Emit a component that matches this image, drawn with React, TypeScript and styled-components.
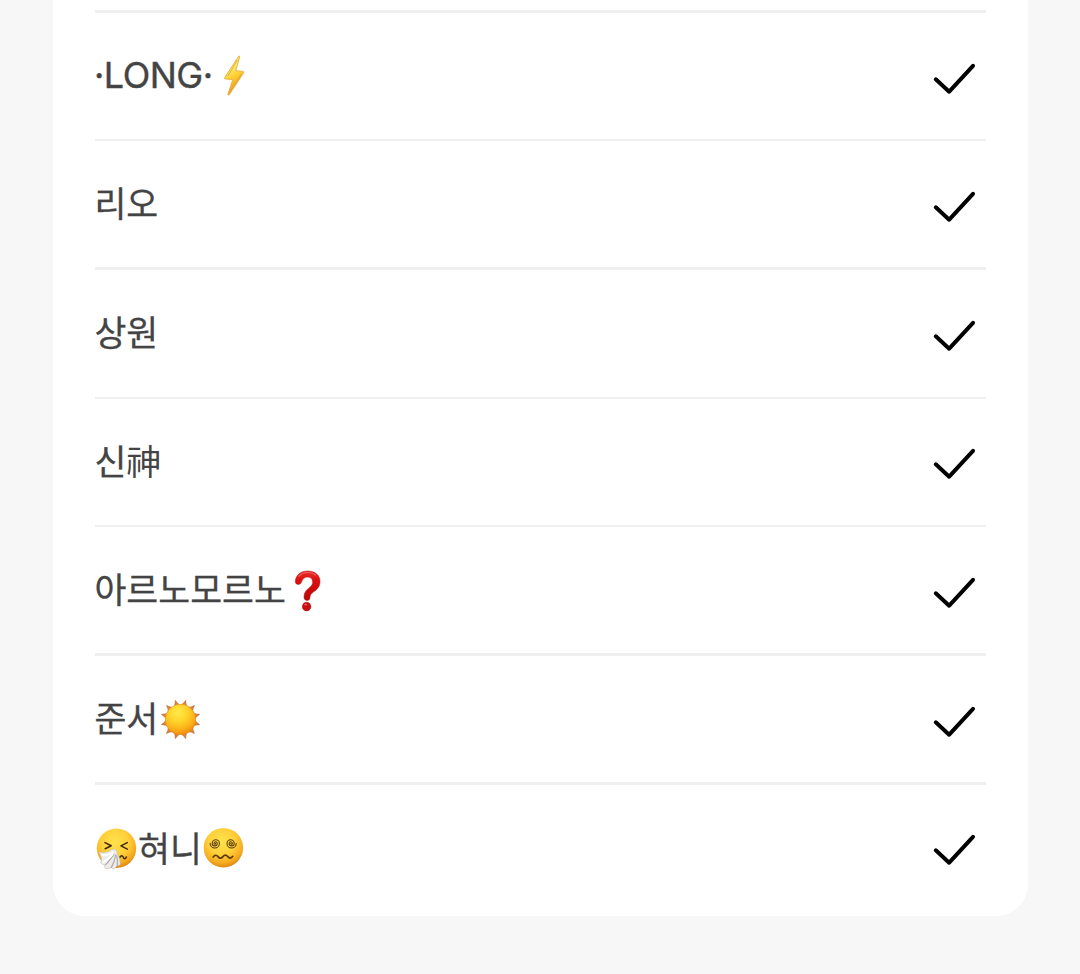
import { ReactNode } from "react";
import styled, { createGlobalStyle } from "styled-components";

const COLORS = {
  background: "#f7f7f7",
  surface: "#ffffff",
  border: "#efefef",
  textPrimary: "#444444",
  check: "#000000",
};

interface IMember {
  id: string;
  name: ReactNode;
  height: number;
  line: number;
  offset: number;
}

const GlobalStyle = createGlobalStyle`
  * {
    box-sizing: border-box;
  }

  body {
    margin: 0;
    background: ${COLORS.background};
  }
`;

const Page = styled.main`
  height: 974px;
  padding: 0 52px 58px 53px;
  background: ${COLORS.background};
  overflow: hidden;
`;

const Card = styled.ul`
  margin: 0;
  padding: 10px 42px 0;
  list-style: none;
  background: ${COLORS.surface};
  border-radius: 0 0 32px 32px;
`;

const Row = styled.li<{ $height: number; $line: number; $offset: number }>`
  display: flex;
  align-items: flex-start;
  justify-content: space-between;
  height: ${(props) => props.$height}px;
  padding-top: ${(props) => props.$offset - props.$line}px;
  border-top: ${(props) => props.$line}px solid ${COLORS.border};
`;

const Name = styled.div`
  display: flex;
  align-items: center;
  height: 48px;
  color: ${COLORS.textPrimary};
  white-space: nowrap;
`;

const Hangul = styled.span<{ $rise?: number }>`
  padding-bottom: ${(props) => props.$rise ?? 6}px;
  margin-left: -0.6px;
  font-family: "Noto Sans CJK KR", sans-serif;
  font-size: 34.7px;
  font-weight: 400;
  line-height: 42px;
  -webkit-text-stroke: 0.3px ${COLORS.textPrimary};
`;

const Hanja = styled(Hangul)`
  margin-left: 0;
  -webkit-text-stroke: 0;
`;

const Latin = styled.span`
  padding-bottom: 4px;
  margin-left: -1px;
  font-family: Inter, sans-serif;
  font-size: 36px;
  font-weight: 400;
  line-height: 44px;
  letter-spacing: -0.5px;
  -webkit-text-stroke: 0.4px ${COLORS.textPrimary};
`;

const Emoji = styled.svg<{ $left?: number; $right?: number }>`
  flex: none;
  width: 42px;
  height: 42px;
  margin-left: ${(props) => props.$left ?? 0}px;
  margin-right: ${(props) => props.$right ?? 0}px;
  overflow: visible;
`;

const Check = styled.svg`
  flex: none;
  width: 48px;
  height: 48px;
  margin-right: 8px;
  fill: none;
  stroke: ${COLORS.check};
  stroke-width: 4;
  stroke-linecap: round;
  stroke-linejoin: round;
`;

const BoltEmoji = () => (
  <Emoji viewBox="0 0 42 42" $left={2}>
    <defs>
      <linearGradient id="bolt" x1="0" y1="0" x2="0.3" y2="1">
        <stop offset="0" stopColor="#fbd35c" />
        <stop offset="0.35" stopColor="#fff06e" />
        <stop offset="0.65" stopColor="#fcc92c" />
        <stop offset="1" stopColor="#e89a1c" />
      </linearGradient>
    </defs>
    <path
      d="M23.6 0.2 9.6 21.8Q9.2 22.8 10.4 22.9L17.7 23.6 12.9 38.6Q13.2 39.9 14.4 38.4L28.7 16.8Q29.2 15.5 27.8 15.4L20.8 14.8 24.6.9Q24.5-.4 23.6.2Z"
      fill="url(#bolt)"
      stroke="#e8ad3d"
      strokeWidth="0.9"
      strokeLinejoin="round"
    />
    <path d="m22.5 4-9.8 16.2M14.5 36.5l12-18.3" stroke="#e39b35" strokeWidth="0.8" />
  </Emoji>
);

const QuestionEmoji = () => (
  <Emoji viewBox="0 0 42 42" $left={0.6}>
    <defs>
      <linearGradient id="question" x1="0" y1="0" x2="0" y2="1">
        <stop offset="0" stopColor="#ea302b" />
        <stop offset="0.3" stopColor="#de1010" />
        <stop offset="1" stopColor="#b80808" />
      </linearGradient>
    </defs>
    <path
      d="M9.3 11.4C9.8 5 14.8 1 21.6 1c7.3 0 12.4 4 12.4 10.4 0 4.8-2.4 7.6-6 10.2-2.9 2.1-3.9 3.2-4.1 6.3-.2 1.7-1.1 2.5-2.9 2.5-2 0-3-1.1-3-3.3 0-4.2 1.6-6.7 5-9.2 2.5-1.9 3.7-3.4 3.7-5.8 0-3.1-2.1-5-5.2-5-3.1 0-4.7 1.5-5.8 4.5-.7 2-1.7 2.8-3.3 2.8-2 0-3.2-1.1-3.1-3Z"
      fill="url(#question)"
      stroke="#b50f0f"
      strokeWidth="0.5"
    />
    <circle cx="20.6" cy="36.6" r="4.3" fill="#c90c0c" stroke="#a90c0c" strokeWidth="0.5" />
    <path
      d="M13.1 6.2c2-2.5 4.8-3.7 8.6-3.7 3.2 0 5.9.9 7.7 2.5"
      fill="none"
      stroke="#f4665f"
      strokeWidth="1.1"
      strokeLinecap="round"
    />
    <ellipse cx="19.8" cy="34.6" rx="1.6" ry="0.9" fill="#ee625c" />
  </Emoji>
);

const SunEmoji = () => (
  <Emoji viewBox="0 0 42 42" $left={1.5}>
    <defs>
      <radialGradient id="sun" cx="0.42" cy="0.28" r="0.75">
        <stop offset="0" stopColor="#ffe94a" />
        <stop offset="0.4" stopColor="#ffd42b" />
        <stop offset="0.75" stopColor="#fcae17" />
        <stop offset="1" stopColor="#ee8512" />
      </radialGradient>
    </defs>
    {Array.from({ length: 12 }, (_, i) => (
      <path
        key={i}
        d="M16.8 6.8Q19.7 4.6 20.5.8 21.3 4.6 24.2 6.8Z"
        fill="#dd8638"
        stroke="#b3622a"
        strokeWidth="0.6"
        transform={`rotate(${15 + i * 30} 20.5 20.5)`}
      />
    ))}
    <circle cx="20.5" cy="20.5" r="15.2" fill="url(#sun)" stroke="#e69222" strokeWidth="0.5" />
  </Emoji>
);

const FaceGradient = ({ id }: { id: string }) => (
  <defs>
    <radialGradient id={id} cx="0.46" cy="0.34" r="0.68">
      <stop offset="0" stopColor="#ffe24c" />
      <stop offset="0.5" stopColor="#ffd03a" />
      <stop offset="0.8" stopColor="#f6ac20" />
      <stop offset="1" stopColor="#d98212" />
    </radialGradient>
  </defs>
);

const SneezeEmoji = () => (
  <Emoji viewBox="0 0 42 42" $right={1.6}>
    <FaceGradient id="sneeze" />
    <circle cx="21.5" cy="21.3" r="19.7" fill="url(#sneeze)" />
    <g fill="none" stroke="#45290b" strokeWidth="1.6" strokeLinecap="round" strokeLinejoin="round">
      <path d="m10 15.6 6.2 3.1-6 3M32.3 15.6l-6.3 3.3 6.3 3.2" />
      <path d="M25 30.2c1-2 2.7-1.9 3.4.3.6 1.8 2.1 1.6 3-.5" />
    </g>
    <path
      d="M3.4 25c3 .4 6.6 1 9.5-.3 2.4-1 4.4-3.3 6.6-2.6 2 .6 2.8 2.5 2.6 4.4 2.1 3.1 3.5 7 3.1 11.4-1 .6-2.1.7-3.2.3-.6 1.8-1.6 3-3.1 3.8-1.1-.3-2-.8-2.5-1.6-1.8 1.2-3.9 1.7-6.1 1-.9-1.2-.8-2.5-.1-3.8-1.7.2-3.2-.3-4.5-1.6 1.4-3.6.8-7.1-2.3-11Z"
      fill="#eeecea"
      stroke="#b5b0a8"
      strokeWidth="0.5"
    />
    <path
      d="M19 27.2c-2.6 3.6-5 7.2-8.2 10.4M20.6 28c-.6 4.3-2 8.6-4.3 12.6M21.6 28.8c1.2 3.2 1.3 6 .6 9.1"
      fill="none"
      stroke="#b0aca7"
      strokeWidth="1.2"
      strokeLinecap="round"
    />
    <path
      d="M18 25.4c-3.8 1.9-7.6 3.4-10.8 2.6M17.5 27.5c-3 2.8-5.6 5.6-9 7.3"
      fill="none"
      stroke="#ffffff"
      strokeWidth="2"
      strokeLinecap="round"
    />
  </Emoji>
);

const Swirl = ({ transform }: { transform: string }) => (
  <path
    d="M.4 0a.8.8 0 0 1-1.6 0 1.6 1.6 0 0 1 3.2 0 2.5 2.5 0 0 1-5 0 3.6 3.6 0 0 1 7.2 0 4.6 4.6 0 0 1-9.2 0"
    transform={transform}
    strokeWidth="1.1"
  />
);

const DizzyEmoji = () => (
  <Emoji viewBox="0 0 42 42" $left={0.8}>
    <FaceGradient id="dizzy" />
    <circle cx="20.4" cy="20.8" r="19.7" fill="url(#dizzy)" />
    <g fill="none" stroke="#5c3c0d" strokeLinecap="round" strokeLinejoin="round">
      <Swirl transform="translate(12.2 16.4)" />
      <Swirl transform="translate(28.2 16.4) scale(-1 1)" />
      <path
        d="M10.2 30.1c1.7-2.3 3.3-2.4 4.8-.5 1.7 2.1 3.2 2.1 4.9 0 1.7-2 3.2-2 4.9 0 1.7 2.1 3.3 1.9 5-.3"
        strokeWidth="1.7"
      />
    </g>
  </Emoji>
);

const CheckIcon = () => (
  <Check viewBox="0 0 48 48">
    <path d="M5.8 26.3 19.2 38.7 43 12.8" />
  </Check>
);

const MEMBERS: IMember[] = [
  {
    id: "long",
    name: (
      <>
        <Latin>·LONG·</Latin>
        <BoltEmoji />
      </>
    ),
    height: 129,
    line: 3,
    offset: 43,
  },
  { id: "rio", name: <Hangul>리오</Hangul>, height: 128, line: 2, offset: 42 },
  { id: "sangwon", name: <Hangul>상원</Hangul>, height: 130, line: 3, offset: 43 },
  {
    id: "shin",
    name: (
      <>
        <Hangul $rise={4}>신</Hangul>
        <Hanja $rise={4}>神</Hanja>
      </>
    ),
    height: 128,
    line: 2,
    offset: 41,
  },
  {
    id: "arno",
    name: (
      <>
        <Hangul>아르노모르노</Hangul>
        <QuestionEmoji />
      </>
    ),
    height: 128,
    line: 2,
    offset: 42,
  },
  {
    id: "junseo",
    name: (
      <>
        <Hangul>준서</Hangul>
        <SunEmoji />
      </>
    ),
    height: 129,
    line: 3,
    offset: 43,
  },
  {
    id: "hyeoni",
    name: (
      <>
        <SneezeEmoji />
        <Hangul $rise={3}>혀니</Hangul>
        <DizzyEmoji />
      </>
    ),
    height: 134,
    line: 3,
    offset: 42,
  },
];

export default function App() {
  return (
    <>
      <GlobalStyle />
      <Page>
        <Card>
          {MEMBERS.map((member) => (
            <Row
              key={member.id}
              $height={member.height}
              $line={member.line}
              $offset={member.offset}
            >
              <Name>{member.name}</Name>
              <CheckIcon />
            </Row>
          ))}
        </Card>
      </Page>
    </>
  );
}
